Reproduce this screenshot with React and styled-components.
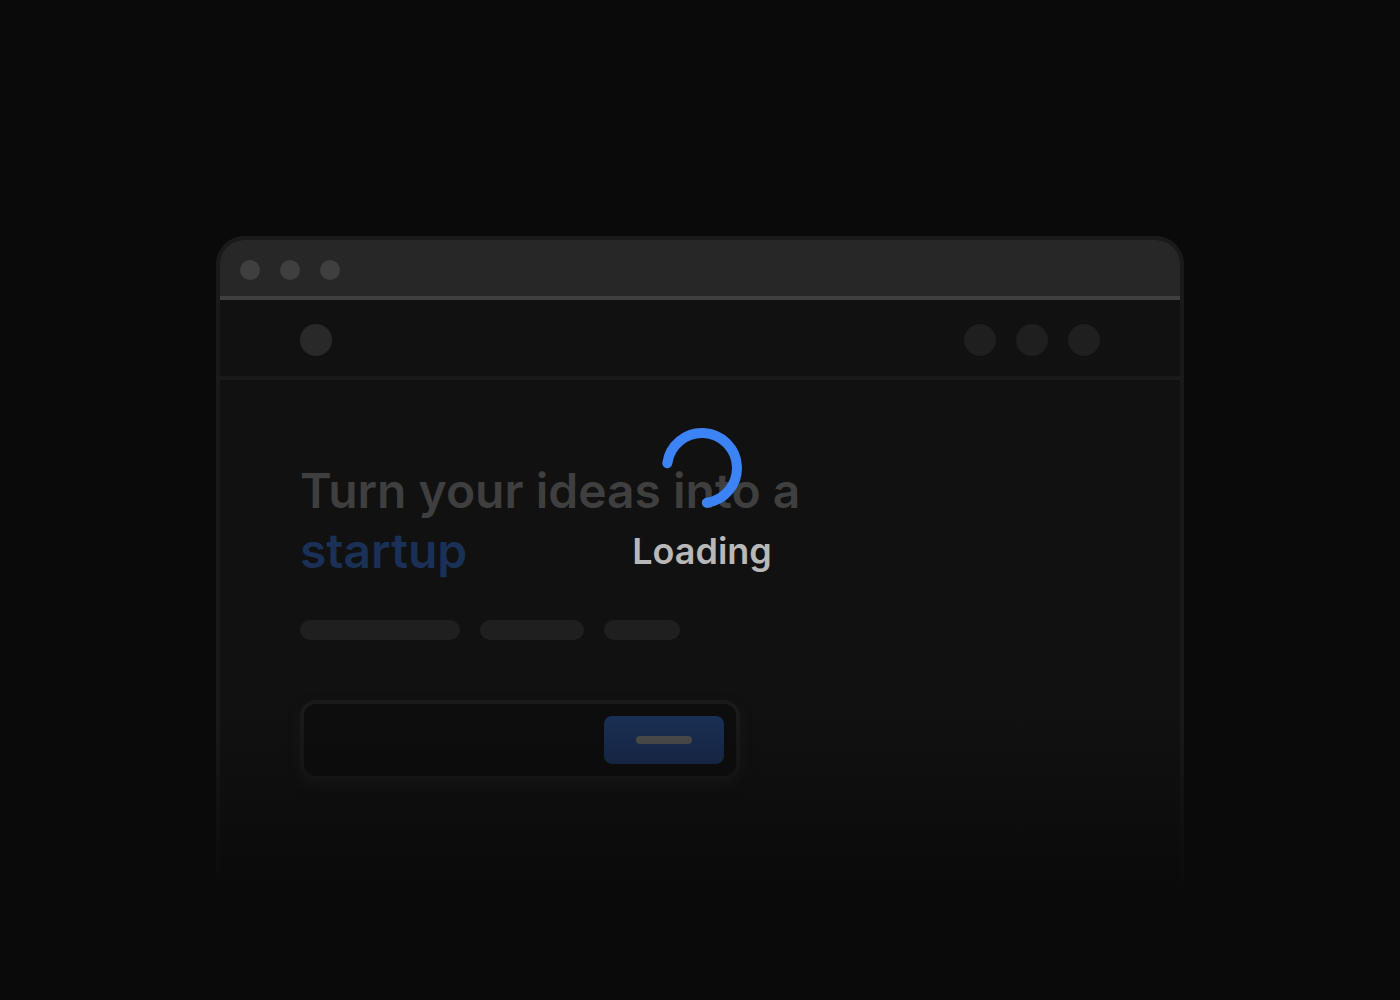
import React from "react";
import styled, { createGlobalStyle } from "styled-components";

const GlobalStyle = createGlobalStyle`
  * { box-sizing: border-box; }
  body {
    margin: 0;
    background: #0a0a0a;
    font-family: Inter, "Liberation Sans", sans-serif;
  }
`;

const Page = styled.main`
  min-height: 100vh;
  padding: 236px 24px 96px;
  display: flex;
  justify-content: center;
  align-items: flex-start;
`;

const Preview = styled.section`
  position: relative;
  width: 100%;
  max-width: 968px;
`;

const Window = styled.div`
  border: 4px solid #1a1a1a;
  border-bottom: 0;
  border-radius: 28px 28px 0 0;
  background: #111111;
  overflow: hidden;
`;

const TitleBar = styled.div`
  display: flex;
  gap: 20px;
  padding: 20px 20px 16px;
  background: #272727;
  border-bottom: 4px solid #3f3f3f;
`;

const Dot = styled.span`
  width: ${(p) => p.$size}px;
  height: ${(p) => p.$size}px;
  border-radius: 50%;
  background: ${(p) => p.$color};
`;

const Nav = styled.nav`
  display: flex;
  justify-content: space-between;
  padding: 24px 80px 20px;
  border-bottom: 4px solid #1a1a1a;
`;

const NavItems = styled.div`
  display: flex;
  gap: 20px;
`;

const Hero = styled.div`
  padding: 81px 80px 112px;
`;

const Title = styled.h1`
  margin: 0;
  max-width: 560px;
  font-size: 48px;
  line-height: 60px;
  font-weight: 600;
  color: #3f3f3f;
`;

const Accent = styled.span`
  display: block;
  color: #1a3057;
`;

const Pills = styled.div`
  display: flex;
  gap: 20px;
  margin-top: 39px;
`;

const Pill = styled.span`
  width: ${(p) => p.$width}px;
  height: 20px;
  border-radius: 10px;
  background: #1f1f1f;
`;

const SignupForm = styled.form`
  display: flex;
  align-items: center;
  max-width: 440px;
  height: 80px;
  margin-top: 60px;
  padding: 0 12px;
  gap: 12px;
  border: 4px solid #1a1a1a;
  border-radius: 16px;
  background: #0d0d0d;
  box-shadow: 0 6px 12px #1a1a1a;
`;

const Field = styled.input`
  flex: 1;
  min-width: 0;
  height: 48px;
  padding: 0;
  border: 0;
  outline: 0;
  background: transparent;
  color: #3f3f3f;
  font: inherit;
`;

const Submit = styled.button`
  display: flex;
  align-items: center;
  justify-content: center;
  width: 120px;
  height: 48px;
  padding: 0;
  border: 0;
  border-radius: 8px;
  background: #1a3057;
`;

const SubmitLine = styled.span`
  width: 56px;
  height: 8px;
  border-radius: 4px;
  background: #525252;
`;

const Fade = styled.div`
  position: absolute;
  inset: auto 0 0;
  height: 180px;
  background: linear-gradient(to bottom, rgba(10, 10, 10, 0), #0a0a0a);
  pointer-events: none;
`;

const Loader = styled.div`
  position: absolute;
  inset: 192px 0 auto 4px;
  display: flex;
  flex-direction: column;
  align-items: center;
  gap: 20px;
`;

const LoaderText = styled.span`
  font-size: 36px;
  line-height: 46px;
  font-weight: 600;
  color: #b8b8b8;
`;

export default function App() {
  return (
    <>
      <GlobalStyle />
      <Page>
        <Preview>
          <Window>
            <TitleBar>
              {[0, 1, 2].map((i) => (
                <Dot key={i} $size={20} $color="#3f3f3f" />
              ))}
            </TitleBar>
            <Nav>
              <Dot $size={32} $color="#292929" />
              <NavItems>
                {[0, 1, 2].map((i) => (
                  <Dot key={i} $size={32} $color="#1f1f1f" />
                ))}
              </NavItems>
            </Nav>
            <Hero>
              <Title>
                Turn your ideas into a <Accent>startup</Accent>
              </Title>
              <Pills>
                {[160, 104, 76].map((width) => (
                  <Pill key={width} $width={width} />
                ))}
              </Pills>
              <SignupForm onSubmit={(e) => e.preventDefault()}>
                <Field type="email" aria-label="Email" />
                <Submit type="submit" aria-label="Sign up">
                  <SubmitLine />
                </Submit>
              </SignupForm>
            </Hero>
          </Window>
          <Fade />
          <Loader role="status">
            <svg width="80" height="80" viewBox="0 0 80 80" fill="none" aria-hidden="true">
              <path
                d="M5.3 35.2A35 35 0 1 1 44.8 74.7"
                stroke="#3c83f6"
                strokeWidth="10"
                strokeLinecap="round"
              />
            </svg>
            <LoaderText>Loading</LoaderText>
          </Loader>
        </Preview>
      </Page>
    </>
  );
}
